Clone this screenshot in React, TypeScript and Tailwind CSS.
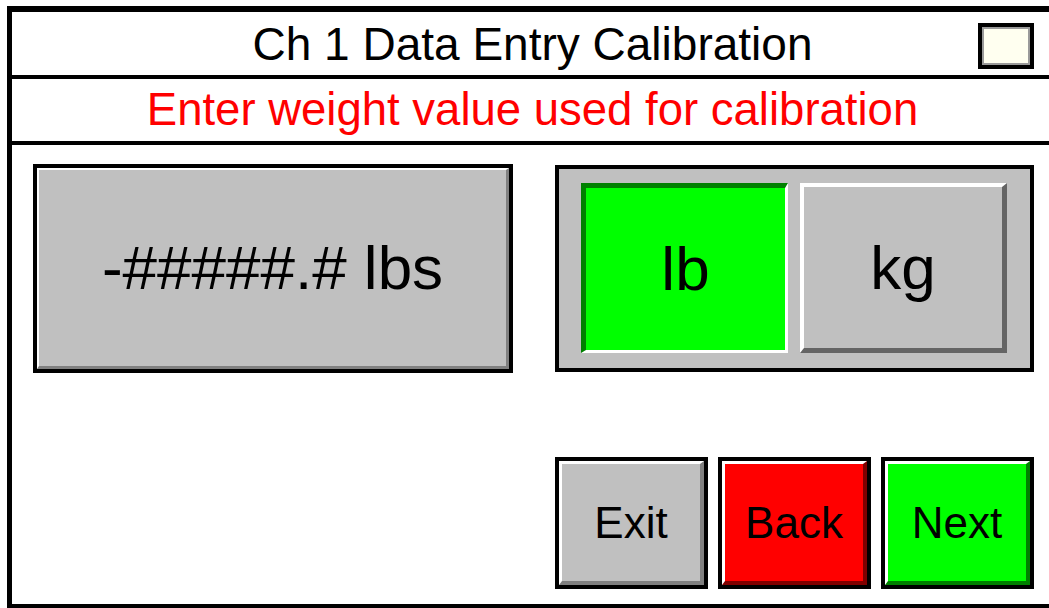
import React from "react";

const font = { fontFamily: '"Liberation Sans", Arial, sans-serif' };

const NavButton = ({ label, bg, shade }: { label: string; bg: string; shade: string }) => {
  return (
    <div className="w-[153px] h-[132px] border-4 border-black">
      <div
        className={`flex h-full w-full items-center justify-center border-t-[3px] border-l-[3px] border-r-4 border-b-4 border-t-white border-l-white ${bg} ${shade}`}
      >
        <span className="text-[44px] leading-none text-black">{label}</span>
      </div>
    </div>
  );
};

const App = () => {
  return (
    <div className="w-[1049px] h-[608px] overflow-hidden bg-white" style={font}>
      <div className="ml-[7px] mt-[6px] w-[1050px] h-[602px] border-l-[5px] border-t-[6px] border-b-4 border-black flex flex-col">
        {/* header */}
        <div className="relative h-[67px] shrink-0 flex items-center justify-center border-b-4 border-black pr-[4px]">
          <span className="text-[46px] leading-none text-black">Ch 1 Data Entry Calibration</span>
          <div className="absolute right-[23px] top-[11px] w-[56px] h-[46px] border-4 border-black">
            <div className="h-full w-full border-2 border-[#9a9a9a] bg-[#fffff0]" />
          </div>
        </div>

        {/* prompt */}
        <div className="h-[66px] shrink-0 flex items-center justify-center border-b-4 border-black pr-[4px]">
          <span className="text-[45.5px] leading-none text-[#ff0000]">
            Enter weight value used for calibration
          </span>
        </div>

        {/* body */}
        <div className="flex px-[21px] pt-[19px]">
          <div className="w-[480px] h-[209px] border-4 border-black">
            <div className="flex h-full w-full items-center justify-center border-t-2 border-l-2 border-r-[3px] border-b-[3px] border-t-white border-l-white border-r-[#808080] border-b-[#808080] bg-[#c0c0c0]">
              <span className="text-[62px] leading-none text-black">-#####.# lbs</span>
            </div>
          </div>

          <div className="ml-[42px] flex flex-col">
            <div className="mt-px w-[479px] h-[207px] border-4 border-black bg-[#c0c0c0] flex gap-[12px] pl-[22px] pt-[14px]">
              <div className="w-[207px] h-[170px] flex items-center justify-center border-t-[5px] border-l-[5px] border-r-[3px] border-b-[3px] border-t-[#008000] border-l-[#008000] border-r-white border-b-white bg-[#00ff00]">
                <span className="text-[62px] leading-none text-black">lb</span>
              </div>
              <div className="w-[207px] h-[170px] flex items-center justify-center border-t-4 border-l-4 border-r-[5px] border-b-[5px] border-t-white border-l-white border-r-[#646464] border-b-[#646464] bg-[#c0c0c0]">
                <span className="text-[62px] leading-none text-black">kg</span>
              </div>
            </div>

            <div className="mt-[85px] flex gap-[10px]">
              <NavButton label="Exit" bg="bg-[#c0c0c0]" shade="border-r-[#808080] border-b-[#808080]" />
              <NavButton label="Back" bg="bg-[#ff0000]" shade="border-r-[#800000] border-b-[#800000]" />
              <NavButton label="Next" bg="bg-[#00ff00]" shade="border-r-[#008000] border-b-[#008000]" />
            </div>
          </div>
        </div>
      </div>
    </div>
  );
};

export default App;
